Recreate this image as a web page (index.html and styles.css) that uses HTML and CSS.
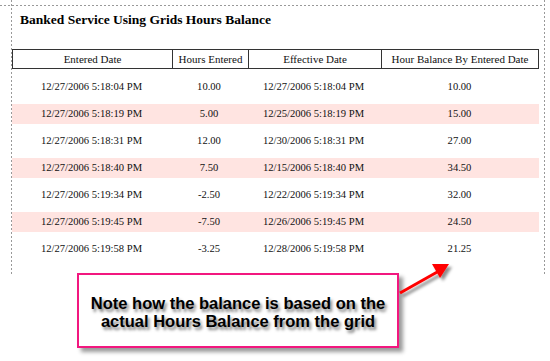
FILE: index.html
```html
<!DOCTYPE html>
<html>
<head>
<meta charset="utf-8">
<link rel="stylesheet" href="styles.css">
</head>
<body>
<div class="page">
  <div class="guide-top"></div>
  <h1 class="title">Banked Service Using Grids Hours Balance</h1>
  <div class="grid">
    <div class="head">
      <div class="hc">Entered Date</div>
      <div class="hc">Hours Entered</div>
      <div class="hc">Effective Date</div>
      <div class="hc">Hour Balance By Entered Date</div>
    </div>
    <div class="rows">
      <div class="row"><span>12/27/2006 5:18:04 PM</span><span>10.00</span><span>12/27/2006 5:18:04 PM</span><span>10.00</span></div>
      <div class="row alt"><span>12/27/2006 5:18:19 PM</span><span>5.00</span><span>12/25/2006 5:18:19 PM</span><span>15.00</span></div>
      <div class="row"><span>12/27/2006 5:18:31 PM</span><span>12.00</span><span>12/30/2006 5:18:31 PM</span><span>27.00</span></div>
      <div class="row alt"><span>12/27/2006 5:18:40 PM</span><span>7.50</span><span>12/15/2006 5:18:40 PM</span><span>34.50</span></div>
      <div class="row"><span>12/27/2006 5:19:34 PM</span><span>-2.50</span><span>12/22/2006 5:19:34 PM</span><span>32.00</span></div>
      <div class="row alt"><span>12/27/2006 5:19:45 PM</span><span>-7.50</span><span>12/26/2006 5:19:45 PM</span><span>24.50</span></div>
      <div class="row"><span>12/27/2006 5:19:58 PM</span><span>-3.25</span><span>12/28/2006 5:19:58 PM</span><span>21.25</span></div>
    </div>
  </div>
</div>
<div class="callout">Note how the balance is based on the<br>actual Hours Balance from the grid</div>
<svg class="arrow" width="70" height="50" viewBox="0 0 70 50">
  <defs>
    <filter id="sh" x="-30%" y="-30%" width="160%" height="160%">
      <feGaussianBlur in="SourceAlpha" stdDeviation="1.5"/>
      <feOffset dx="3" dy="3" result="b"/>
      <feFlood flood-color="#000" flood-opacity="0.45"/>
      <feComposite in2="b" operator="in"/>
      <feMerge><feMergeNode/><feMergeNode in="SourceGraphic"/></feMerge>
    </filter>
  </defs>
  <g filter="url(#sh)">
    <line x1="10" y1="43" x2="49" y2="21" stroke="#ff0000" stroke-width="3"/>
    <polygon points="59,14 42,14 50,28" fill="#ff0000"/>
  </g>
</svg>
</body>
</html>
```
FILE: styles.css
```css
html, body {
  margin: 0;
  padding: 0;
  background: #fff;
}
body {
  position: relative;
  width: 550px;
  height: 361px;
  overflow: hidden;
  font-family: "Liberation Serif", "Times New Roman", serif;
  color: #111;
}
.page {
  margin-left: 11px;
  width: 534px;
  height: 276px;
  background:
    repeating-linear-gradient(to bottom, #999 0 2px, transparent 2px 4px) left top / 1px 100% no-repeat,
    repeating-linear-gradient(to bottom, #999 0 2px, transparent 2px 4px) right top / 1px 100% no-repeat;
}
.guide-top {
  height: 1px;
  margin-left: -11px;
  width: 545px;
  position: relative;
  top: 5px;
  background: repeating-linear-gradient(to right, #999 0 2px, transparent 2px 4px);
}
.title {
  margin: 0;
  padding: 10px 0 0 9px;
  font-size: 13.5px;
  line-height: 18px;
  font-weight: bold;
  color: #000;
}
.grid {
  margin-top: 20px;
  margin-left: 1px;
  width: 527px;
}
.head {
  display: grid;
  grid-template-columns: 159px 76px 133px 1fr;
  border: 1px solid #333;
  height: 18px;
}
.hc {
  font-size: 11px;
  line-height: 18px;
  text-align: center;
  border-left: 1px solid #333;
  white-space: nowrap;
}
.hc:first-child {
  border-left: none;
}
.rows {
  margin-top: 8px;
  display: flex;
  flex-direction: column;
  gap: 7px;
}
.row {
  display: grid;
  grid-template-columns: 159px 76px 133px 1fr;
  height: 20px;
  font-size: 10.6px;
  line-height: 20px;
  text-align: center;
  white-space: nowrap;
}
.row.alt {
  background: #ffe4e1;
}
.callout {
  position: absolute;
  left: 77px;
  top: 273px;
  width: 318px;
  height: 68px;
  border: 2px solid #f2177f;
  background: #fff;
  box-shadow: 4px 4px 4px rgba(0, 0, 0, 0.4);
  font-family: "Liberation Sans", Arial, sans-serif;
  font-weight: bold;
  font-size: 16.5px;
  line-height: 18px;
  text-align: center;
  color: #000;
  display: flex;
  align-items: center;
  justify-content: center;
  padding-top: 3px;
  box-sizing: content-box;
  text-shadow: 2px 3px 3px rgba(0, 0, 0, 0.5);
}
.arrow {
  position: absolute;
  left: 390px;
  top: 250px;
}
```
